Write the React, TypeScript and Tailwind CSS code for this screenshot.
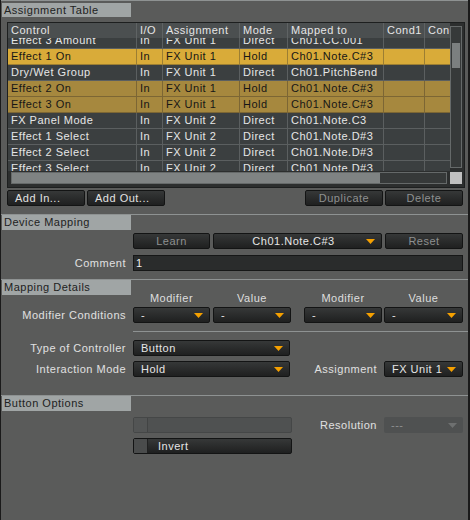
import React from "react";

const cols = ["w-[129px]", "w-[26px]", "w-[77px]", "w-[48px]", "w-[96px]", "w-[41px]", "w-[25px]"];

type Tone = "row" | "hot" | "sel";

const rows: { cells: string[]; tone: Tone }[] = [
  { cells: ["Effect 3 Amount", "In", "FX Unit 1", "Direct", "Ch01.CC.001", "", ""], tone: "row" },
  { cells: ["Effect 1 On", "In", "FX Unit 1", "Hold", "Ch01.Note.C#3", "", ""], tone: "hot" },
  { cells: ["Dry/Wet Group", "In", "FX Unit 1", "Direct", "Ch01.PitchBend", "", ""], tone: "row" },
  { cells: ["Effect 2 On", "In", "FX Unit 1", "Hold", "Ch01.Note.C#3", "", ""], tone: "sel" },
  { cells: ["Effect 3 On", "In", "FX Unit 1", "Hold", "Ch01.Note.C#3", "", ""], tone: "sel" },
  { cells: ["FX Panel Mode", "In", "FX Unit 2", "Direct", "Ch01.Note.C3", "", ""], tone: "row" },
  { cells: ["Effect 1 Select", "In", "FX Unit 2", "Direct", "Ch01.Note.D#3", "", ""], tone: "row" },
  { cells: ["Effect 2 Select", "In", "FX Unit 2", "Direct", "Ch01.Note.D#3", "", ""], tone: "row" },
  { cells: ["Effect 3 Select", "In", "FX Unit 2", "Direct", "Ch01.Note.D#3", "", ""], tone: "row" },
];

const toneCls: Record<Tone, string> = {
  row: "bg-[#3b3f40] text-[#e6e6e6] border-[#5b5f60]",
  hot: "bg-[#d9ab39] text-[#161616] border-[#9c7e33]",
  sel: "bg-[#a6883e] text-[#161616] border-[#7c6634]",
};

function Arrow({ dim }: { dim?: boolean }) {
  return (
    <svg width="9" height="5" viewBox="0 0 9 5" className="shrink-0">
      <path d="M0 0 H9 L4.5 5 Z" fill={dim ? "#6e7070" : "#f5a000"} />
    </svg>
  );
}

function SectionHeader({ title, first }: { title: string; first?: boolean }) {
  return (
    <div className="flex flex-col">
      <div className="h-px bg-[#8e9292]" />
      <div
        className={`ml-[1px] w-[129px] bg-[#a0a5a5] pl-[2px] text-[#202222] flex items-center ${
          first ? "mt-[2px] h-[14px]" : "h-[15px]"
        }`}
      >
        {title}
      </div>
    </div>
  );
}

function Btn({
  label,
  disabled,
  left,
  className = "",
}: {
  label: string;
  disabled?: boolean;
  left?: boolean;
  className?: string;
}) {
  return (
    <div
      className={`h-[16px] shrink-0 flex items-center rounded-[2px] border border-[#131414] bg-linear-to-b from-[#363838] to-[#1f2020] ${
        left ? "pl-[7px]" : "justify-center"
      } ${disabled ? "text-[#8e9090]" : "text-[#e2e2e2]"} ${className}`}
    >
      {label}
    </div>
  );
}

function Drop({ value, center, className = "" }: { value: string; center?: boolean; className?: string }) {
  return (
    <div
      className={`h-[16px] shrink-0 flex items-center rounded-[2px] border border-[#131414] bg-linear-to-b from-[#363838] to-[#1f2020] text-[#e6e6e6] pl-[7px] pr-[6px] ${className}`}
    >
      <span className={`flex-1 whitespace-nowrap overflow-hidden ${center ? "text-center" : ""}`}>{value}</span>
      <Arrow />
    </div>
  );
}

function Label({ text, className = "w-[125px]" }: { text: string; className?: string }) {
  return <div className={`${className} shrink-0 mr-[7px] text-right text-[#e0e0e0]`}>{text}</div>;
}

function AssignmentTable() {
  return (
    <div className="ml-[6px] mt-[5px] w-[458px] h-[166px] border border-[#1d1f1f] bg-[#2c2e2e] flex flex-col">
      <div className="flex h-[148px]">
        <div className="w-[442px] shrink-0 flex flex-col overflow-hidden">
          <div className="h-[15px] shrink-0 flex bg-[#4b4f50] text-[#e6e6e6]">
            {["Control", "I/O", "Assignment", "Mode", "Mapped to", "Cond1", "Cond2"].map((h, i) => (
              <div
                key={h}
                className={`${cols[i]} shrink-0 pl-[3px] flex items-center overflow-hidden whitespace-nowrap ${
                  i < 6 ? "border-r border-[#5f6364]" : ""
                }`}
              >
                {h}
              </div>
            ))}
          </div>
          <div className="flex-1 overflow-hidden">
            <div className="-mt-[5px]">
              {rows.map((r, ri) => (
                <div key={ri} className={`h-[16px] flex border-b ${toneCls[r.tone]}`}>
                  {r.cells.map((c, i) => (
                    <div
                      key={i}
                      className={`${cols[i]} shrink-0 pl-[3px] flex items-center overflow-hidden whitespace-nowrap ${
                        i < 6 ? "border-r" : ""
                      } ${toneCls[r.tone]}`}
                    >
                      {c}
                    </div>
                  ))}
                </div>
              ))}
            </div>
          </div>
        </div>
        <div className="mt-[3px] w-[12px] h-[142px] shrink-0 border border-[#656969] bg-[#363939] flex flex-col">
          <div className="mt-[16px] mx-[1px] h-[25px] bg-[#7b7f7f]" />
        </div>
      </div>
      <div className="flex mt-[1px]">
        <div className="ml-[3px] w-[436px] h-[12px] border border-[#656969] bg-[#363939] flex">
          <div className="w-[368px] bg-[#7f8383]" />
        </div>
        <div className="ml-[3px] w-[12px] h-[12px] bg-[#c0c0c0]" />
      </div>
    </div>
  );
}

export default function App() {
  return (
    <div className="w-[470px] h-[520px] bg-[#5a5b5a] border-l border-r-2 border-[#1a1a1a] font-['Liberation_Sans',Arial,sans-serif] text-[11px] tracking-[0.5px] leading-none flex flex-col overflow-hidden">
      <SectionHeader title="Assignment Table" first />
      <AssignmentTable />

      <div className="mt-[2px] flex">
        <Btn label="Add In..." left className="ml-[6px] w-[78px]" />
        <Btn label="Add Out..." left className="ml-[2px] w-[78px]" />
        <Btn label="Duplicate" disabled className="ml-[140px] w-[78px]" />
        <Btn label="Delete" disabled className="ml-[2px] w-[78px]" />
      </div>

      <div className="mt-[8px]">
        <SectionHeader title="Device Mapping" />
      </div>
      <div className="mt-[3px] flex ml-[132px]">
        <Btn label="Learn" disabled className="w-[77px]" />
        <Drop value="Ch01.Note.C#3" center className="ml-[3px] w-[169px]" />
        <Btn label="Reset" disabled className="ml-[3px] w-[78px]" />
      </div>
      <div className="mt-[6px] flex items-center">
        <Label text="Comment" />
        <div className="w-[330px] h-[16px] border border-[#161717] bg-[#2a2c2c] text-[#f0f0f0] pl-[2px] flex items-center">
          1
        </div>
      </div>

      <div className="mt-[8px]">
        <SectionHeader title="Mapping Details" />
      </div>
      <div className="-mt-[4px] h-[14px] flex items-center ml-[132px] text-[#dedede]">
        <div className="w-[77px] text-center">Modifier</div>
        <div className="ml-[3px] w-[78px] text-center">Value</div>
        <div className="ml-[13px] w-[78px] text-center">Modifier</div>
        <div className="ml-[2px] w-[79px] text-center">Value</div>
      </div>
      <div className="mt-[2px] flex items-center">
        <Label text="Modifier Conditions" />
        <Drop value="-" className="w-[77px]" />
        <Drop value="-" className="ml-[3px] w-[78px]" />
        <Drop value="-" className="ml-[13px] w-[78px]" />
        <Drop value="-" className="ml-[2px] w-[79px]" />
      </div>
      <div className="mt-[8px] ml-[132px] h-px bg-[#8e9292]" />
      <div className="mt-[8px] flex items-center">
        <Label text="Type of Controller" />
        <Drop value="Button" className="w-[157px]" />
      </div>
      <div className="mt-[5px] flex items-center">
        <Label text="Interaction Mode" />
        <Drop value="Hold" className="w-[157px]" />
        <Label text="Assignment" className="w-[87px]" />
        <Drop value="FX Unit 1" className="w-[79px]" />
      </div>

      <div className="mt-[18px]">
        <SectionHeader title="Button Options" />
      </div>
      <div className="mt-[6px] flex items-center">
        <div className="w-[125px] mr-[7px] shrink-0" />
        <div className="w-[159px] h-[16px] shrink-0 flex rounded-[2px] border border-[#454747] bg-[#4f5151]">
          <div className="w-[14px] border-r border-[#424444] bg-[#535555]" />
        </div>
        <Label text="Resolution" className="w-[85px]" />
        <div className="w-[79px] h-[16px] shrink-0 flex items-center rounded-[2px] bg-[#4f5151] text-[#8e9090] pl-[7px] pr-[6px]">
          <span className="flex-1">---</span>
          <Arrow dim />
        </div>
      </div>
      <div className="mt-[5px] flex items-center">
        <div className="w-[125px] mr-[7px] shrink-0" />
        <div className="w-[159px] h-[16px] shrink-0 flex items-center rounded-[2px] border border-[#131414] bg-linear-to-b from-[#363838] to-[#1f2020] text-[#e6e6e6]">
          <div className="w-[14px] h-full border-r border-[#202121] bg-[#4a4c4c]" />
          <span className="ml-[10px]">Invert</span>
        </div>
      </div>
    </div>
  );
}
